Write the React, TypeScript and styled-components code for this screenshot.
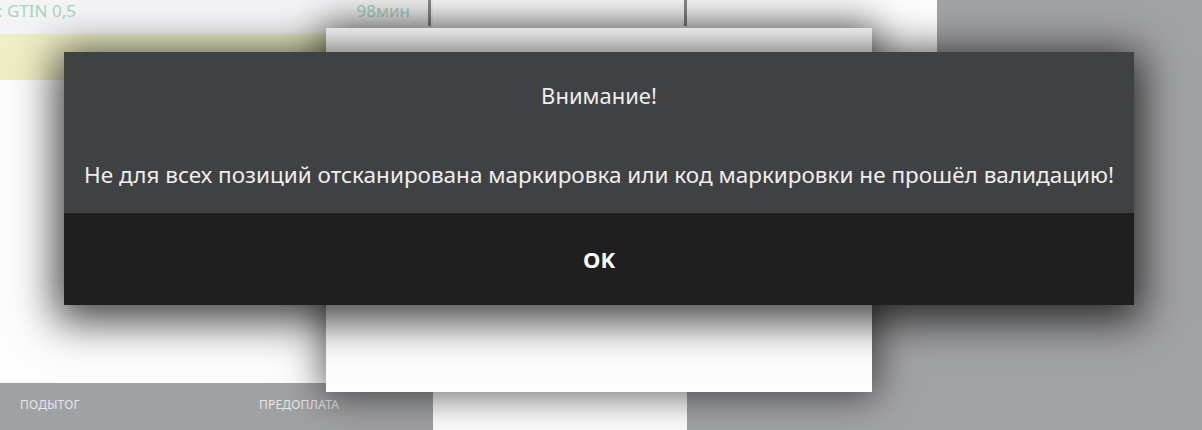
import styled, { createGlobalStyle } from "styled-components";

const GlobalStyle = createGlobalStyle`
  html,
  body {
    margin: 0;
    padding: 0;
    overflow: hidden;
    background: #a2a3a5;
  }

  body {
    font-family: "Noto Sans", "Open Sans", sans-serif;
  }
`;

const Screen = styled.div`
  position: relative;
  width: 1202px;
  height: 430px;
  overflow: hidden;
  display: grid;
  grid-template-columns: 433px 254px 250px 1fr;
  background: #a2a3a5;
`;

const Pane = styled.div<{ $bg?: string }>`
  display: flex;
  flex-direction: column;
  min-width: 0;
  background: ${(p) => p.$bg ?? "#fdfdfd"};
`;

const TopRow = styled.div<{ $bg?: string }>`
  height: 34px;
  display: flex;
  align-items: flex-start;
  background: ${(p) => p.$bg ?? "#fdfdfd"};
`;

const OrderLine = styled.div`
  flex: 1;
  display: flex;
  justify-content: space-between;
  margin-left: -2px;
  padding-right: 18px;
  color: #a8d4bd;
  font-size: 17px;
  line-height: 22px;
  white-space: nowrap;
`;

const Divider = styled.div<{ $gap?: number }>`
  width: 3px;
  height: 26px;
  margin-left: auto;
  margin-right: ${(p) => p.$gap ?? 0}px;
  background: #8b8b8d;
`;

const SelectedRow = styled.div`
  height: 46px;
  background: #efefc6;
`;

const Body = styled.div<{ $height?: number }>`
  flex: ${(p) => (p.$height ? `0 0 ${p.$height}px` : "1")};
  background: #fdfdfd;
`;

const Footer = styled.div`
  height: 47px;
  display: grid;
  grid-template-columns: 239px 1fr;
  padding: 14px 0 0 20px;
  box-sizing: border-box;
  background: #a0a1a3;
`;

const FooterLabel = styled.span`
  color: #e6e6e8;
  font-size: 12px;
  line-height: 16px;
  text-transform: uppercase;
  letter-spacing: 0.2px;
`;

const Sheet = styled.div`
  position: absolute;
  left: 326px;
  top: 28px;
  width: 546px;
  height: 364px;
  background: #fdfdfd;
  box-shadow: 0 0 36px 4px rgba(0, 0, 0, 0.6);
`;

const Alert = styled.div`
  position: absolute;
  left: 64px;
  top: 52px;
  width: 1070px;
  display: flex;
  flex-direction: column;
  box-shadow: 0 8px 40px 8px rgba(0, 0, 0, 0.75);
`;

const AlertBody = styled.div`
  height: 161px;
  display: flex;
  flex-direction: column;
  align-items: center;
  background: #404143;
  color: #eeeeee;
`;

const AlertTitle = styled.div`
  margin-top: 28px;
  font-size: 22px;
  line-height: 30px;
`;

const AlertMessage = styled.div`
  margin-top: 50px;
  font-size: 22.5px;
  line-height: 30px;
  white-space: nowrap;
`;

const OkButton = styled.button`
  height: 92px;
  border: 0;
  padding: 0;
  background: #1f1f1f;
  color: #ffffff;
  font-family: inherit;
  font-size: 22px;
  font-weight: 700;
  cursor: pointer;
`;

export default function App() {
  return (
    <>
      <GlobalStyle />
      <Screen>
        <Pane>
          <TopRow $bg="#f4f4f6">
            <OrderLine>
              <span>: GTIN 0,5</span>
              <span>98мин</span>
            </OrderLine>
            <Divider $gap={2} />
          </TopRow>
          <SelectedRow />
          <Body />
          <Footer>
            <FooterLabel>Подытог</FooterLabel>
            <FooterLabel>Предоплата</FooterLabel>
          </Footer>
        </Pane>
        <Pane>
          <TopRow>
            <Divider />
          </TopRow>
          <Body />
        </Pane>
        <Pane $bg="#a2a3a5">
          <Body $height={230} />
        </Pane>
        <Pane $bg="#a2a3a5" />

        <Sheet />
        <Alert>
          <AlertBody>
            <AlertTitle>Внимание!</AlertTitle>
            <AlertMessage>
              Не для всех позиций отсканирована маркировка или код маркировки не
              прошёл валидацию!
            </AlertMessage>
          </AlertBody>
          <OkButton>OK</OkButton>
        </Alert>
      </Screen>
    </>
  );
}
